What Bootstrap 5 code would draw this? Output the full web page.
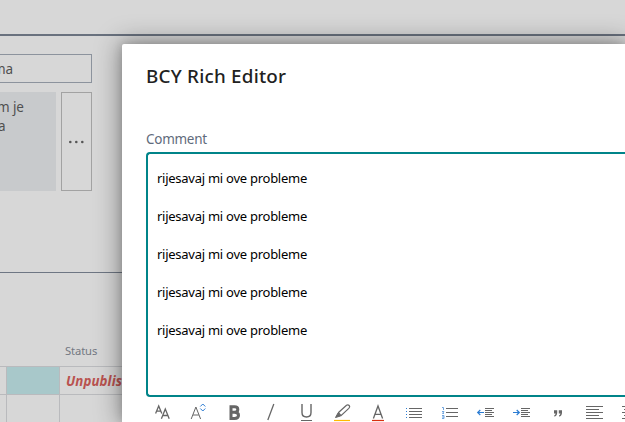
<!DOCTYPE html>
<html lang="hr">
<head>
<meta charset="utf-8">
<title>BCY Rich Editor</title>
<link href="https://cdn.jsdelivr.net/npm/bootstrap@5.3.0/dist/css/bootstrap.min.css" rel="stylesheet">
<style>
html{overflow:hidden}
body{width:625px;height:422px;background:#d7d7d7;font-family:"Noto Sans","Open Sans",sans-serif;font-size:13.5px;color:#505050}
.topbar{height:36px;border-bottom:2px solid #69717e}
.upper{height:237px;padding-top:18px;border-bottom:1px solid #6e7683}
.title-field{width:92px;height:29px;border:1px solid #8c939d;border-left:0;line-height:29px;overflow:hidden}
.title-field span{margin-left:-7px;display:block}
.memo-row{margin-top:9px}
.memo{width:56px;height:99px;background:#c8cacc;line-height:19px;padding-top:6px;overflow:hidden}
.memo div{margin-left:-3px;letter-spacing:-.1px}
.memo .last-line{margin-left:-2px}
.assist{width:31px;height:99px;border:1px solid #a2a2a2;margin-left:5px}
.status-label{font-size:11.2px;letter-spacing:-.1px;color:#737882;height:93px;padding:69px 0 0 65px;line-height:17px}
.grid-row{height:28px;border-top:1px solid #b9babd}
.grid-row>div{border-right:1px solid #b9babd}
.c1{width:7px}.c2{width:53px}
.teal{background:#a8c8ca}
.unpub{color:#b9524f;font-size:13.3px;font-weight:700;font-style:italic;padding-left:6px;line-height:28px;letter-spacing:.1px}
.dialog-panel{left:122px;top:44px;right:0;bottom:0;background:#fff;border-radius:2px 0 0 0;box-shadow:0 0 26px 2px rgba(0,0,0,.38),0 0 10px rgba(0,0,0,.16);padding:18px 0 0 24px}
.dialog-panel h1{font-size:18.8px;font-weight:500;line-height:28px;color:#212121;margin:0;letter-spacing:.24px}
.field-label{color:#5f6b7c;line-height:20px;margin-top:39px;font-size:13.5px;height:19px;letter-spacing:-.27px}
.editor{margin-top:4px;height:245px;border:2px solid #008489;border-right:0;border-radius:4px 0 0 4px;padding:15px 9px;color:#000;font-size:13px;line-height:19px}
.editor p{margin-bottom:19px;letter-spacing:-.26px}
.tools{margin-left:-2px;margin-top:1px;overflow:hidden}
.tools svg{width:36px;height:24px;flex:none;fill:none;stroke:#666;stroke-width:1}
</style>
<script src="https://cdn.jsdelivr.net/npm/bootstrap@5.3.0/dist/js/bootstrap.bundle.min.js"></script>
</head>
<body class="position-relative overflow-hidden">
<div class="topbar"></div>
<main>
  <section class="upper">
    <div class="title-field"><span>ma</span></div>
    <div class="d-flex memo-row">
      <div class="memo"><div>m je</div><div class="last-line">a</div></div>
      <div class="assist d-flex align-items-center justify-content-center"><svg width="17" height="4" fill="#555"><circle cx="2.3" cy="2" r="1.3"/><circle cx="8.3" cy="2" r="1.3"/><circle cx="14.3" cy="2" r="1.3"/></svg></div>
    </div>
  </section>
  <div class="status-label">Status</div>
  <div class="grid-row d-flex"><div class="c1"></div><div class="c2 teal"></div><span class="unpub">Unpublished</span></div>
  <div class="grid-row d-flex"><div class="c1"></div><div class="c2"></div></div>
</main>
<div class="dialog-panel position-absolute" role="dialog">
  <h1>BCY Rich Editor</h1>
  <div class="field-label">Comment</div>
  <div class="editor"><p>rijesavaj mi ove probleme</p><p>rijesavaj mi ove probleme</p><p>rijesavaj mi ove probleme</p><p>rijesavaj mi ove probleme</p><p>rijesavaj mi ove probleme</p></div>
  <div class="tools d-flex">
    <svg viewBox="0 0 36 24"><path d="M11.6 15.5 14.7 8 17.8 15.5M12.9 13.2H16.5M17.4 20.7 21.3 11 25.2 20.7M19 17.5H23.7" stroke-width="1.3"/></svg>
    <svg viewBox="0 0 36 24"><path d="M11.2 21 15.9 9 20.6 21M13 17H18.8"/><path stroke="#2b7cd3" d="M20.3 8.5 22.8 6 25.3 8.5M20.3 10.5 22.8 13 25.3 10.5"/></svg>
    <svg viewBox="0 0 36 24"><path stroke-width="3" d="M15 8.7H18.5Q21.8 8.7 21.8 11.4Q21.8 14.2 18.5 14.2H15M18.5 14.2Q22.5 14.2 22.5 17.2Q22.5 20.5 18.5 20.5H15M15 7.2V22"/></svg>
    <svg viewBox="0 0 36 24"><path stroke-width="1.3" d="M21.8 6 15.8 22"/></svg>
    <svg viewBox="0 0 36 24"><path stroke-width="1.4" d="M14 6V14.5Q14 19 18.5 19T23 14.5V6"/><path d="M13 22.5H24"/></svg>
    <svg viewBox="0 0 36 24"><path stroke-width="1.2" d="M14.5 14.5 22.5 7.2Q24 6.2 25.2 7.5T24.8 10.4L17 17.7ZM14.5 14.5 17 17.7"/><path fill="#666" d="M11.5 19.5 14 15 16.5 18Z"/><path stroke="#ffb900" stroke-width="1.2" d="M10 22.5H26"/></svg>
    <svg viewBox="0 0 36 24"><path stroke-width="1.3" d="M13.4 20.5 18 8 22.6 20.5M15 16.3H21"/><path stroke="#d83010" stroke-width="1.2" d="M12 22.5H24"/></svg>
    <svg viewBox="0 0 36 24"><path d="M13 10.5H26M13 13.5H26M13 16.5H26M13 19.5H26"/><path stroke="#2b7cd3" d="M10 10.5H11M10 13.5H11M10 16.5H11M10 19.5H11"/></svg>
    <svg viewBox="0 0 36 24"><path d="M14 10.5H26M14 14.5H26M14 18.5H26"/><path stroke="#6fa5df" d="M10 9.5H11.5V12M10 13.5H12L10.5 15.5H12M10 17.5H12V20.5H10M10 19H12"/></svg>
    <svg viewBox="0 0 36 24"><path d="M17 10.5H26M17 12.5H24M17 14.5H26M17 16.5H24M17 18.5H26"/><path stroke="#2b7cd3" stroke-width="1.2" d="M16 14.5H9.7M12.3 12 9.7 14.5 12.3 17"/></svg>
    <svg viewBox="0 0 36 24"><path d="M17 10.5H26M17 12.5H24M17 14.5H26M17 16.5H24M17 18.5H26"/><path stroke="#2b7cd3" stroke-width="1.2" d="M9 14.5H15.3M12.7 12 15.3 14.5 12.7 17"/></svg>
    <svg viewBox="0 0 36 24"><path fill="#666" stroke="none" d="M14 12.3H17.2V15Q17 18 14.2 18.6V17.4Q15.5 17 15.6 15.5H14ZM18.8 12.3H22V15Q21.8 18 19 18.6V17.4Q20.3 17 20.4 15.5H18.8Z"/></svg>
    <svg viewBox="0 0 36 24"><path d="M10 8.5H27M10 11.5H23M10 14.5H27M10 17.5H23M10 20.5H27"/></svg>
    <svg viewBox="0 0 36 24"><path d="M10 8.5H27M12 11.5H25M10 14.5H27M12 17.5H25M10 20.5H27"/></svg>
  </div>
</div>
</body>
</html>
